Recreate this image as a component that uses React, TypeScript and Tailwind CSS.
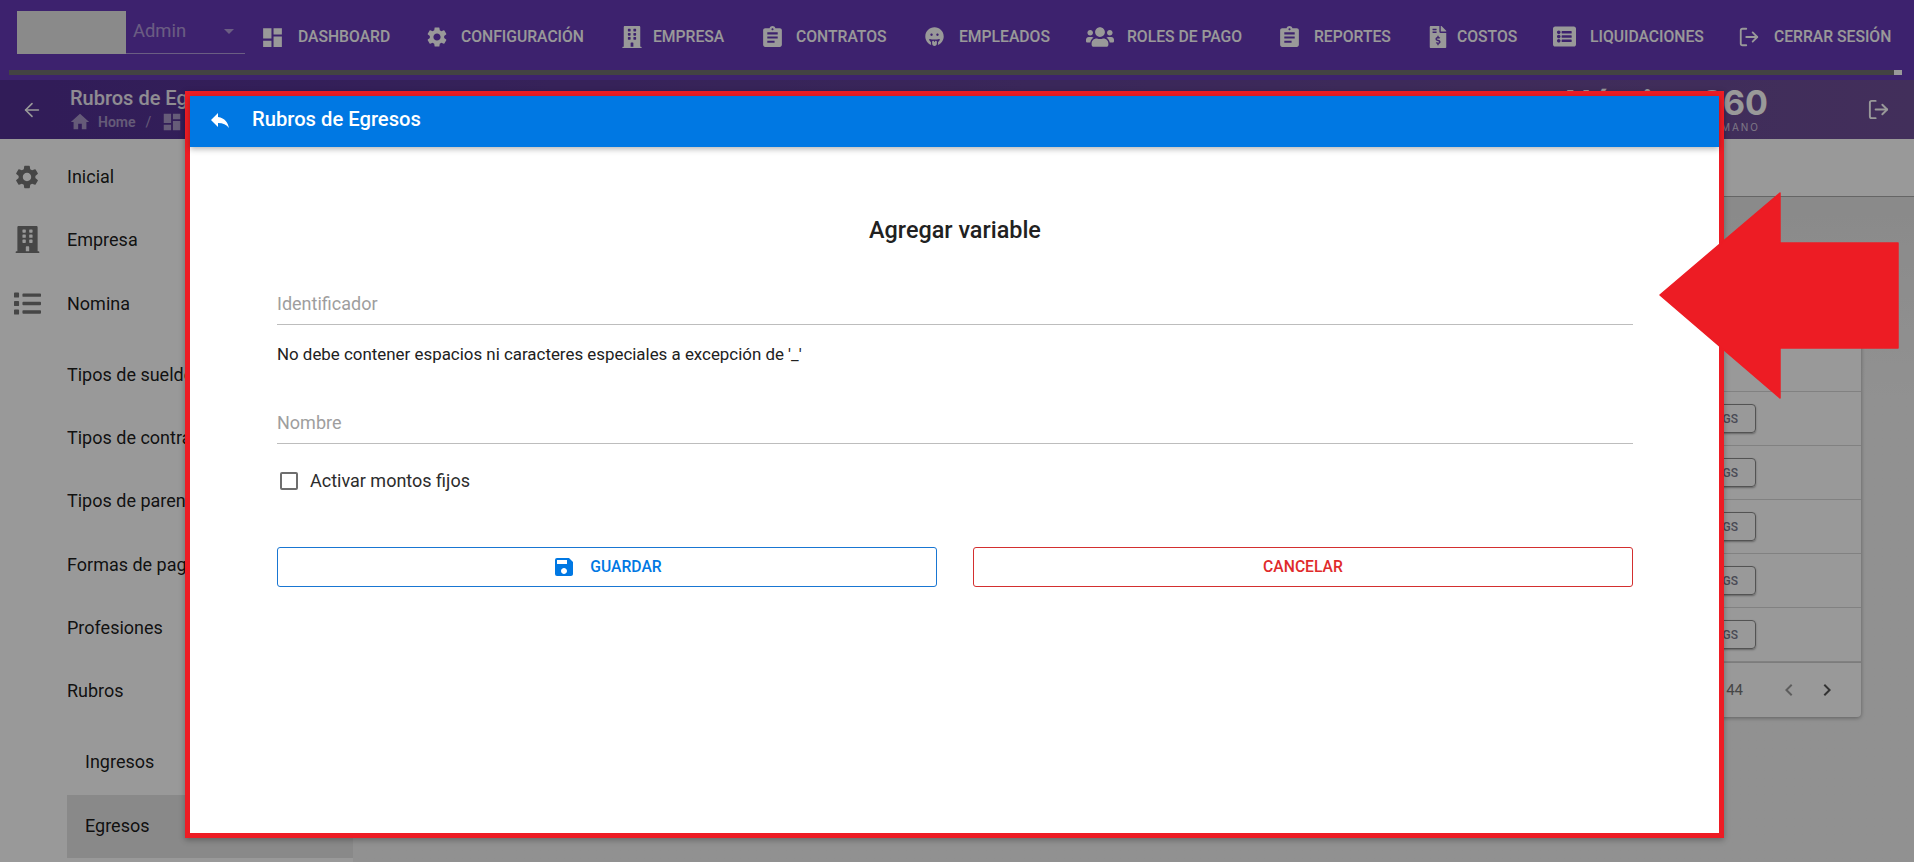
import type { ReactNode } from "react";
import { FaBuilding, FaFileInvoiceDollar, FaGrinTongue, FaList, FaListAlt, FaUsers } from "react-icons/fa";
import { MdArrowDropDown, MdAssignment, MdChevronLeft, MdChevronRight, MdDashboard, MdHome, MdReply, MdSave, MdSettings } from "react-icons/md";
import { ArrowLeft, LogOut } from "lucide-react";

const NavItem = ({ icon, label, className, iconBox }: { icon: ReactNode; label: string; className: string; iconBox: string }) => (
  <div className={`flex shrink-0 items-center whitespace-nowrap text-[15.7px] font-medium text-white ${className}`}>
    <span className={`flex shrink-0 items-center ${iconBox}`}>{icon}</span>
    <span>{label}</span>
  </div>
);

const TopBar = () => (
  <header className="h-[80px] shrink-0 bg-[#673ab7]">
    <div className="flex h-[70px] items-start pl-[17px]">
      <div className="mt-[11px] flex h-[43px] w-[228px] shrink-0">
        <div className="h-full w-[109px] bg-[#e6e6e6]" />
        <div className="flex flex-1 items-center justify-between border-b border-white/50 pb-[2px] pl-[7px] pr-[4px] text-[18.4px] text-white/50">
          <span>Admin</span>
          <MdArrowDropDown className="text-[24px]" />
        </div>
      </div>
      <nav className="ml-[18px] mt-[23px] flex items-center">
        <NavItem className="w-[164px]" iconBox="w-[35px]" icon={<MdDashboard className="-ml-[3px] text-[25px]" />} label="DASHBOARD" />
        <NavItem className="w-[194px]" iconBox="w-[34px]" icon={<MdSettings className="-ml-[2px] text-[24px]" />} label="CONFIGURACIÓN" />
        <NavItem className="w-[142px]" iconBox="w-[32px]" icon={<FaBuilding className="text-[22px]" />} label="EMPRESA" />
        <NavItem className="w-[162px]" iconBox="w-[33px]" icon={<MdAssignment className="-ml-[3px] text-[25px]" />} label="CONTRATOS" />
        <NavItem className="w-[161px]" iconBox="w-[34px]" icon={<FaGrinTongue className="text-[19px]" />} label="EMPLEADOS" />
        <NavItem className="w-[194px]" iconBox="w-[41px]" icon={<FaUsers className="text-[28px]" />} label="ROLES DE PAGO" />
        <NavItem className="w-[147px]" iconBox="w-[34px]" icon={<MdAssignment className="-ml-[3px] text-[25px]" />} label="REPORTES" />
        <NavItem className="w-[126px]" iconBox="w-[30px]" icon={<FaFileInvoiceDollar className="text-[22px]" />} label="COSTOS" />
        <NavItem className="w-[187px]" iconBox="w-[37px]" icon={<FaListAlt className="text-[23px]" />} label="LIQUIDACIONES" />
        <NavItem className="w-[160px]" iconBox="w-[34px]" icon={<LogOut size={22} strokeWidth={2} className="-ml-[2px]" />} label="CERRAR SESIÓN" />
      </nav>
    </div>
    <div className="ml-[9px] mr-[12px] flex h-[5px] justify-end bg-[#717171]">
      <div className="w-[8px] bg-white" />
    </div>
  </header>
);

const SubHeader = () => (
  <div className="flex h-[59px] shrink-0 items-center bg-linear-to-r from-[#522f93] to-[#6f4f98] text-white">
    <ArrowLeft size={22} strokeWidth={1.75} className="ml-[21px]" />
    <div className="ml-[27px]">
      <div className="text-[20px] font-medium leading-[24px] text-white/90">Rubros de Egresos</div>
      <div className="mt-[1px] flex h-[22px] items-center text-[14px] font-semibold text-white/50">
        <MdHome className="-ml-[1px] text-[22px]" />
        <span className="ml-[7px]">Home</span>
        <span className="mx-[10px] font-normal">/</span>
        <MdDashboard className="text-[22px]" />
      </div>
    </div>
    <div className="ml-auto mr-[99px] flex flex-col items-end">
      <div className="font-['Inter',sans-serif] text-[34px] font-bold leading-[34px] text-white">Nómina 360</div>
      <div className="mr-[8px] font-['Inter',sans-serif] text-[10px] leading-[14px] tracking-[2px] text-white/70">TALENTO HUMANO</div>
    </div>
    <LogOut size={23} strokeWidth={2} className="mr-[24px]" />
  </div>
);

const SideRow = ({ label, icon }: { label: string; icon?: ReactNode }) => (
  <div className="relative flex h-[63.25px] items-center whitespace-nowrap pb-[2px] pl-[67px] text-[18px] text-black/90">
    {icon && <span className="absolute left-[13px] flex w-[28px] justify-center text-[#757575]">{icon}</span>}
    {label}
  </div>
);

const SideBar = () => (
  <aside className="w-[353px] shrink-0 bg-white pt-[7px]">
    <SideRow label="Inicial" icon={<MdSettings className="text-[28px]" />} />
    <SideRow label="Empresa" icon={<FaBuilding className="text-[27px]" />} />
    <SideRow label="Nomina" icon={<FaList className="text-[27px]" />} />
    <div className="pt-[8px]">
      <SideRow label="Tipos de sueldo" />
      <SideRow label="Tipos de contrato" />
      <SideRow label="Tipos de parentesco" />
      <SideRow label="Formas de pago" />
      <SideRow label="Profesiones" />
      <SideRow label="Rubros" />
    </div>
    <div className="pt-[8px]">
      <div className="flex h-[63.25px] items-center pb-[2px] pl-[85px] text-[18px] text-black/90">Ingresos</div>
      <div className="ml-[67px] flex h-[63.25px] items-center bg-[#e4e4e4] pb-[2px] pl-[18px] text-[18px] text-black/90">Egresos</div>
    </div>
  </aside>
);

const TableRow = () => (
  <div className="flex h-[54px] items-center justify-end border-b border-[#d8d8d8] pr-[105px]">
    <button className="h-[29px] w-[110px] rounded-[4px] border border-[#8a8a8a] pr-[17px] text-right text-[12px] font-medium text-[#7b7b8e] shadow-[0_1px_2px_rgba(0,0,0,0.35)]">
      TAGS
    </button>
  </div>
);

const Main = () => (
  <main className="flex min-w-0 flex-1 flex-col">
    <div className="h-[58px] shrink-0 border-b border-[#a8a8a8] bg-white" />
    <div className="flex-1 bg-linear-to-b from-[#e6e6e6] to-[#f2f2f2] to-30% pl-[40px] pr-[53px] pt-[93px]">
      <div className="rounded-[4px] bg-white shadow-[0_1px_4px_rgba(0,0,0,0.35)]">
        <div className="h-[102px] border-b border-[#d8d8d8]" />
        <TableRow />
        <TableRow />
        <TableRow />
        <TableRow />
        <TableRow />
        <div className="flex h-[55px] items-center justify-end border-t border-[#cfcfcf] pr-[22px] text-[15px] text-[#757575]">
          <span className="mr-[34px]">1-5 de 44</span>
          <MdChevronLeft className="mr-[14px] text-[24px] text-[#9c9c9c]" />
          <MdChevronRight className="text-[24px] text-[#555]" />
        </div>
      </div>
    </div>
  </main>
);

const Field = ({ placeholder }: { placeholder: string }) => (
  <div className="flex h-[40px] items-center border-b border-[#bdbdbd] pb-[3px] text-[18px] text-[#9e9e9e]">{placeholder}</div>
);

const Modal = () => (
  <div className="absolute left-[185px] top-[91px] z-20 flex h-[747px] w-[1539px] flex-col border-[5px] border-[#ed1c24] bg-white shadow-[0_2px_6px_rgba(0,0,0,0.3)]">
    <div className="flex h-[51px] shrink-0 items-center bg-[#0078e3] pb-[4px] text-white shadow-[0_2px_6px_rgba(0,0,0,0.3)]">
      <MdReply className="ml-[18px] text-[24px]" />
      <span className="ml-[20px] text-[20.2px] font-medium">Rubros de Egresos</span>
    </div>
    <div className="pl-[87px] pr-[86px]">
      <h2 className="mt-[70px] text-center text-[23.4px] font-medium leading-[26px] text-[#212121]">Agregar variable</h2>
      <div className="mt-[42px]">
        <Field placeholder="Identificador" />
      </div>
      <p className="mt-[19px] text-[16.9px] leading-[20px] text-[#212121]">No debe contener espacios ni caracteres especiales a excepción de '_'</p>
      <div className="mt-[40px]">
        <Field placeholder="Nombre" />
      </div>
      <label className="ml-[3px] mt-[27px] flex items-center gap-[12px] text-[18px] leading-[20px] text-[#2c2c2c]">
        <span className="h-[18px] w-[18px] rounded-[2px] border-2 border-[#6e6e6e]" />
        Activar montos fijos
      </label>
      <div className="mt-[56px] grid grid-cols-2 gap-[36px]">
        <button className="flex h-[40px] items-center justify-center gap-[14px] rounded-[3px] border border-[#1976d2] text-[15.7px] font-medium text-[#0078e3]">
          <MdSave className="text-[24px]" />
          GUARDAR
        </button>
        <button className="flex h-[40px] items-center justify-center rounded-[3px] border border-[#d32f2f] text-[15.7px] font-medium text-[#e02b2b]">
          CANCELAR
        </button>
      </div>
    </div>
  </div>
);

const App = () => {
  return (
    <div className="relative flex h-[862px] w-[1914px] flex-col overflow-hidden bg-[#f2f2f2] font-['Roboto',sans-serif]">
      <TopBar />
      <SubHeader />
      <div className="flex min-h-0 flex-1">
        <SideBar />
        <Main />
      </div>

      {/* backdrop */}
      <div className="absolute inset-0 z-10 bg-black/40" />
      <Modal />

      {/* annotation arrow */}
      <svg className="absolute left-[1655px] top-[190px] z-30" width="246" height="212" viewBox="0 0 246 212">
        <path d="M5 105 L125 3 L125 53 L243 53 L243 158 L125 158 L125 208 Z" fill="#ed1c24" stroke="#ed1c24" strokeWidth="1.5" strokeLinejoin="round" />
      </svg>
    </div>
  );
};

export default App;
